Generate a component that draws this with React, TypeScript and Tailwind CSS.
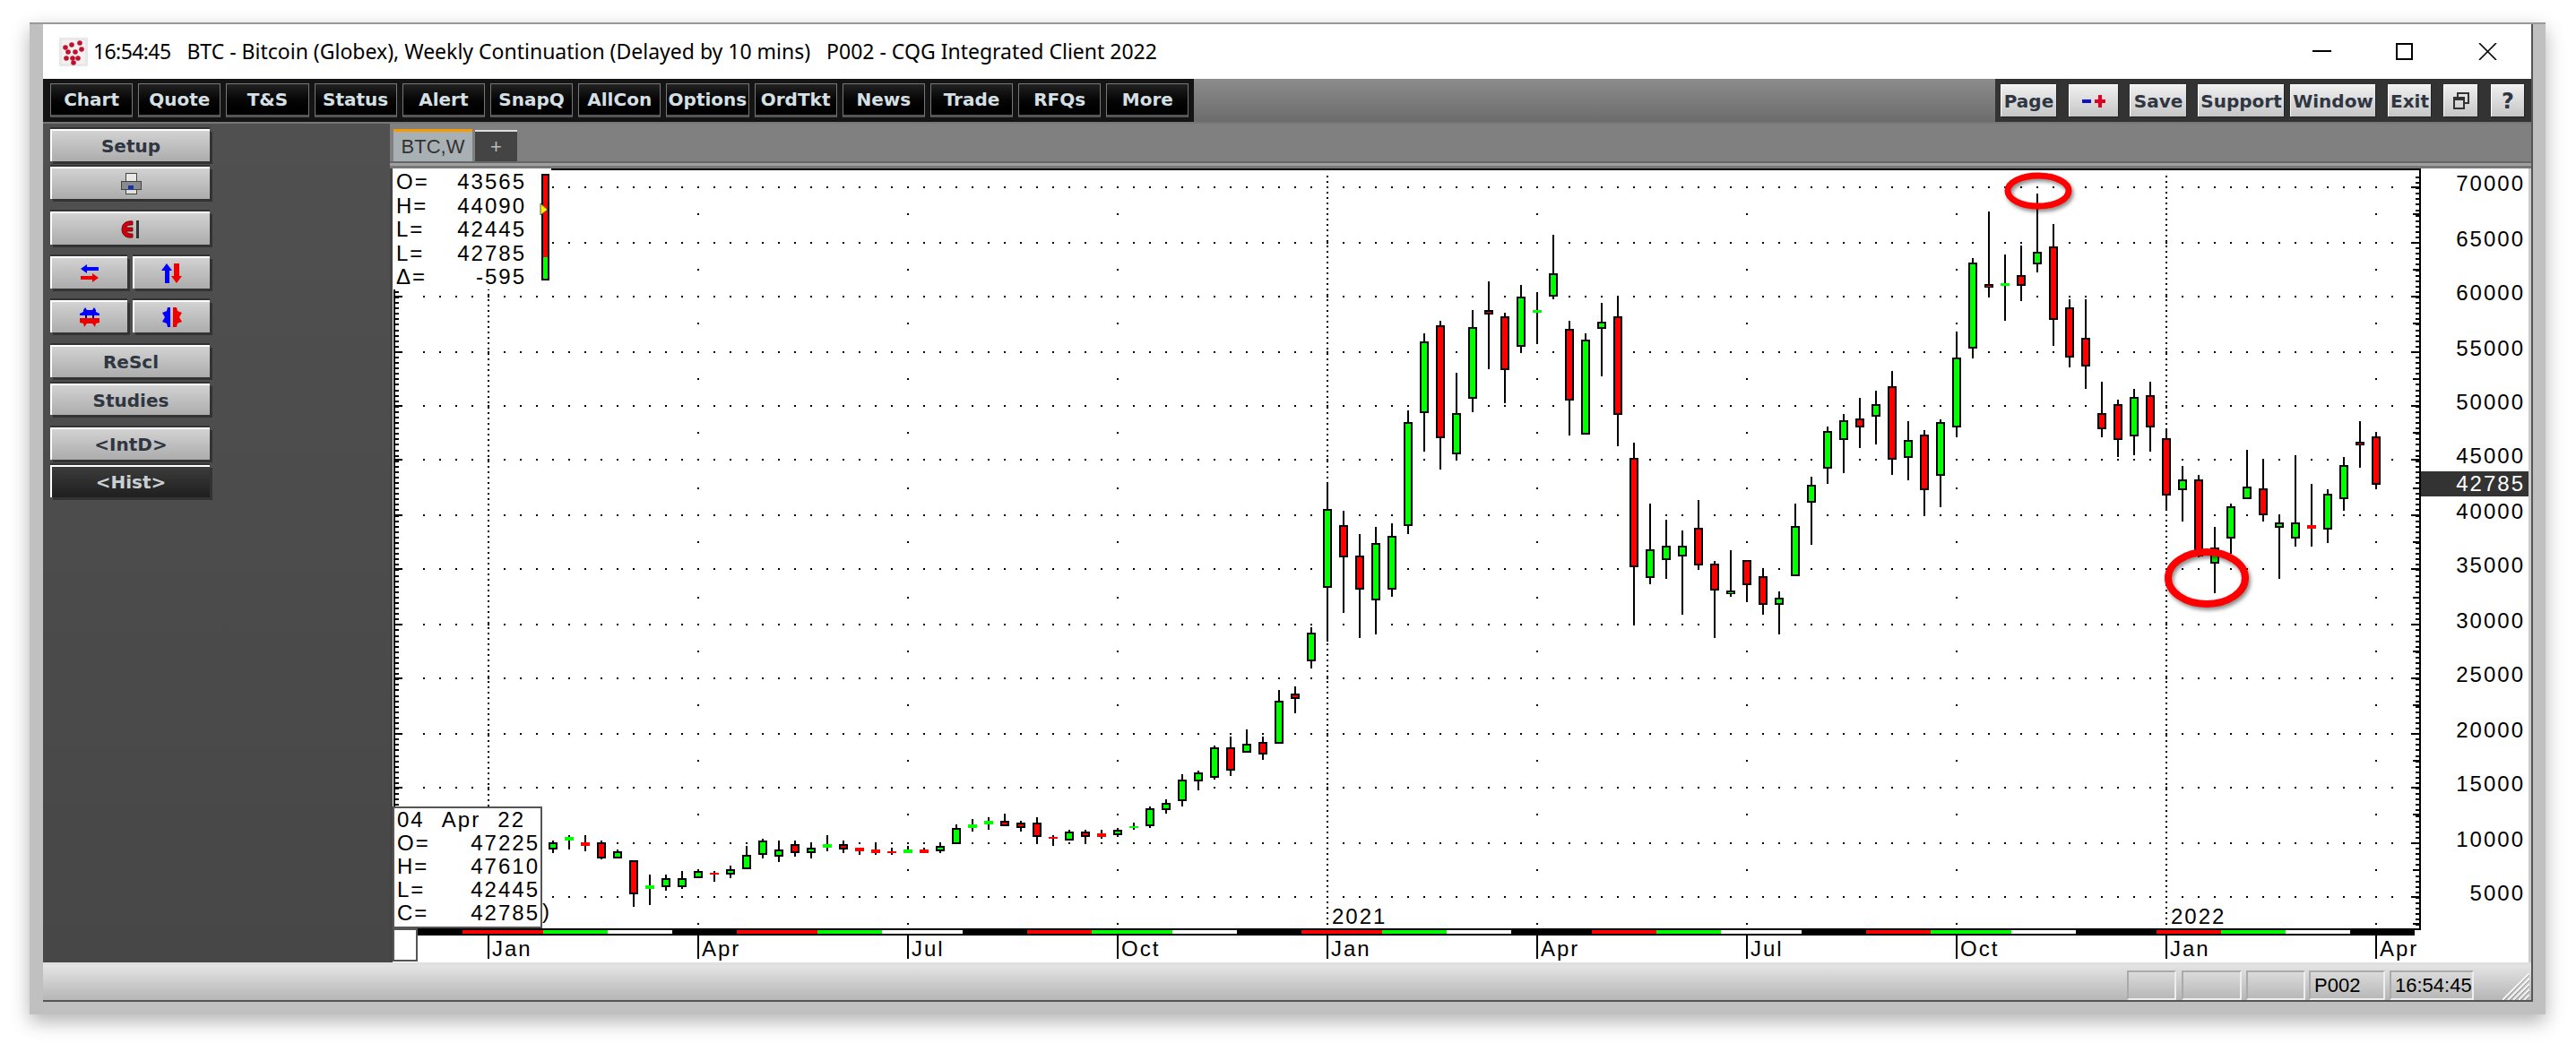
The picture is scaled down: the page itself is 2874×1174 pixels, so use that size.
import React from 'react';

// y pixels of each weekly bar: [high, body top, body bottom, low, kind]
// g/r = outlined body, G/R = flat dash without outline. First bar is i=4.
type Bar = [number, number, number, number, 'g' | 'r' | 'G' | 'R'];
const BARS: Bar[] = [
    [938, 940, 948, 952, 'g'], [932, 934, 938, 948, 'G'], [932, 940, 944, 950, 'R'], [938, 940, 958, 959, 'r'],
    [948, 950, 958, 958, 'g'], [960, 960, 998, 1012, 'r'], [976, 988, 992, 1010, 'G'], [976, 980, 990, 994, 'g'],
    [972, 980, 990, 992, 'g'], [970, 972, 980, 980, 'g'], [972, 974, 976, 984, 'R'], [966, 970, 976, 980, 'g'],
    [944, 954, 970, 970, 'g'], [936, 938, 954, 958, 'g'], [938, 948, 956, 962, 'g'], [938, 942, 952, 956, 'r'],
    [941, 946, 952, 958, 'g'], [932, 942, 946, 950, 'G'], [938, 942, 948, 952, 'r'], [946, 946, 950, 954, 'R'],
    [940, 948, 952, 954, 'R'], [946, 950, 952, 954, 'R'], [944, 948, 952, 952, 'G'], [946, 948, 952, 952, 'R'],
    [940, 944, 950, 952, 'g'], [920, 924, 942, 942, 'g'], [914, 920, 924, 928, 'G'], [912, 916, 920, 926, 'G'],
    [908, 916, 922, 922, 'r'], [916, 918, 924, 928, 'r'], [912, 918, 934, 942, 'r'], [932, 934, 936, 944, 'R'],
    [926, 928, 938, 938, 'g'], [926, 928, 934, 942, 'r'], [926, 930, 934, 936, 'R'], [924, 926, 932, 934, 'g'],
    [918, 922, 924, 926, 'G'], [900, 902, 922, 924, 'g'], [892, 896, 904, 908, 'g'], [864, 870, 894, 900, 'g'],
    [860, 862, 872, 882, 'g'], [832, 834, 868, 870, 'g'], [822, 834, 860, 866, 'r'], [814, 830, 840, 840, 'g'],
    [822, 828, 842, 848, 'r'], [770, 782, 830, 830, 'g'], [766, 774, 780, 796, 'r'], [700, 706, 738, 746, 'g'],
    [538, 568, 656, 716, 'g'], [570, 586, 622, 684, 'r'], [596, 620, 658, 712, 'r'], [588, 606, 670, 708, 'g'],
    [584, 598, 658, 666, 'g'], [458, 471, 587, 596, 'g'], [372, 381, 461, 504, 'g'], [358, 363, 489, 524, 'r'],
    [416, 461, 507, 514, 'g'], [346, 365, 445, 460, 'g'], [314, 346, 351, 412, 'r'], [349, 353, 413, 450, 'r'],
    [318, 331, 387, 394, 'g'], [326, 346, 349, 384, 'G'], [262, 305, 331, 334, 'g'], [358, 367, 447, 486, 'r'],
    [372, 379, 485, 485, 'g'], [338, 359, 367, 420, 'g'], [330, 353, 463, 498, 'r'], [494, 511, 633, 697, 'r'],
    [562, 613, 645, 652, 'g'], [580, 609, 625, 646, 'g'], [592, 609, 621, 686, 'g'], [558, 589, 631, 636, 'r'],
    [626, 629, 659, 712, 'r'], [614, 659, 663, 666, 'g'], [625, 625, 653, 672, 'r'], [634, 643, 675, 686, 'r'],
    [660, 667, 675, 708, 'g'], [562, 587, 643, 643, 'g'], [532, 541, 561, 608, 'g'], [476, 481, 523, 540, 'g'],
    [462, 469, 491, 528, 'g'], [444, 467, 477, 500, 'r'], [436, 451, 465, 496, 'g'], [414, 431, 513, 530, 'r'],
    [470, 491, 511, 536, 'g'], [480, 485, 547, 576, 'r'], [468, 471, 531, 566, 'g'], [370, 399, 477, 488, 'g'],
    [288, 293, 389, 400, 'g'], [236, 317, 321, 332, 'r'], [284, 316, 319, 358, 'G'], [274, 307, 319, 336, 'r'],
    [216, 281, 295, 304, 'g'], [250, 275, 357, 386, 'r'], [334, 343, 399, 410, 'r'], [334, 377, 409, 434, 'r'],
    [426, 461, 479, 488, 'r'], [446, 451, 491, 510, 'r'], [434, 443, 487, 508, 'g'], [426, 441, 477, 504, 'r'],
    [480, 489, 553, 570, 'r'], [520, 535, 547, 582, 'g'], [530, 535, 621, 622, 'r'], [588, 611, 629, 662, 'g'],
    [562, 565, 601, 618, 'g'], [502, 543, 557, 557, 'g'], [512, 545, 575, 582, 'r'], [574, 583, 589, 646, 'g'],
    [508, 583, 601, 610, 'g'], [540, 586, 590, 610, 'R'], [546, 551, 591, 606, 'g'], [510, 519, 557, 570, 'g'],
    [470, 493, 497, 522, 'r'], [482, 487, 541, 546, 'r'],
];

const ROWS = [209, 271, 331, 393, 453, 513, 575, 635, 697, 757, 819, 879, 941, 1001];
const HALF_ROWS = [239, 301, 361, 423, 483, 545, 605, 667, 727, 787, 849, 909, 971, 1031];
const PRICES = ['70000', '65000', '60000', '55000', '50000', '45000', '40000', '35000', '30000', '25000', '20000', '15000', '10000', '5000'];
const TICKS: [number, string][] = [
    [545, 'Jan'], [779, 'Apr'], [1013, 'Jul'], [1247, 'Oct'], [1481, 'Jan'], [1715, 'Apr'],
    [1949, 'Jul'], [2183, 'Oct'], [2417, 'Jan'], [2651, 'Apr'],
];
const BANDS: [number, number, string][] = [
    [516, 606, '#ff0000'], [606, 678, '#00ff00'], [678, 750, '#ffffff'],
    [822, 912, '#ff0000'], [912, 984, '#00ff00'], [984, 1074, '#ffffff'],
    [1146, 1218, '#ff0000'], [1218, 1308, '#00ff00'], [1308, 1380, '#ffffff'],
    [1452, 1542, '#ff0000'], [1542, 1614, '#00ff00'], [1614, 1686, '#ffffff'],
    [1776, 1848, '#ff0000'], [1848, 1920, '#00ff00'], [1920, 2010, '#ffffff'],
    [2082, 2154, '#ff0000'], [2154, 2244, '#00ff00'], [2244, 2316, '#ffffff'],
    [2406, 2478, '#ff0000'], [2478, 2550, '#00ff00'], [2550, 2622, '#ffffff'],
];

const TOP_BUTTONS = ['Chart', 'Quote', 'T&S', 'Status', 'Alert', 'SnapQ', 'AllCon', 'Options', 'OrdTkt', 'News', 'Trade', 'RFQs', 'More'];

const range = (from: number, to: number, step: number) => {
    const out: number[] = [];
    for (let v = from; v <= to; v += step) out.push(v);
    return out;
};

const Chart: React.FC = () => {
    const minor = range(0, 137, 1).map(k => Math.round(197 + k * 6.09));
    return (
        <svg className="absolute left-0 top-0" width={2383} height={886} viewBox="438 188 2383 886" shapeRendering="crispEdges">
            {/* grid dots */}
            {ROWS.map(y => range(473, 2669, 18).map(x => <rect key={`${x}-${y}`} x={x - 1} y={y - 1} width={2} height={2} fill="#000" />))}
            {HALF_ROWS.map(y => TICKS.filter(t => t[1] !== 'Jan').map(t => <rect key={`${t[0]}-${y}`} x={t[0] - 1} y={y - 1} width={2} height={2} fill="#000" />))}
            {[545, 1481, 2417].map(x => range(196, 1032, 6).map(y => <rect key={`${x}:${y}`} x={x - 1} y={y} width={2} height={2} fill="#000" />))}

            {/* bars */}
            {BARS.map((b, n) => {
                const x = 545 + (n + 4) * 18;
                const [hi, top, bot, lo, kind] = b;
                const flat = kind === 'G' || kind === 'R';
                const color = kind === 'g' || kind === 'G' ? '#00ff00' : '#ff0000';
                return (
                    <g key={n}>
                        <rect x={x - 1} y={hi} width={2} height={lo - hi} fill="#000" />
                        {flat ? (
                            <rect x={x - 5} y={top} width={10} height={bot - top} fill={color} />
                        ) : (
                            <>
                                <rect x={x - 5} y={top} width={10} height={bot - top} fill="#000" />
                                <rect x={x - 3} y={top + 2} width={6} height={Math.max(bot - top - 4, 1)} fill={color} />
                            </>
                        )}
                    </g>
                );
            })}

            {/* axes */}
            <rect x={438} y={188} width={2263} height={2} fill="#000" />
            <rect x={2699} y={188} width={2} height={850} fill="#000" />
            <rect x={439} y={188} width={2} height={850} fill="#000" />
            {minor.map(y => <rect key={y} x={2695} y={y} width={4} height={2} fill="#000" />)}
            {minor.map(y => <rect key={y} x={441} y={y} width={4} height={2} fill="#000" />)}
            {HALF_ROWS.map(y => <rect key={y} x={2692} y={y - 1} width={7} height={2} fill="#000" />)}
            {ROWS.map(y => <rect key={y} x={2690} y={y - 1} width={9} height={2} fill="#000" />)}
            {ROWS.map(y => <rect key={y} x={441} y={y - 1} width={8} height={2} fill="#000" />)}

            {/* month strip under the plot */}
            <rect x={438} y={1036} width={2263} height={2} fill="#000" />
            <rect x={466} y={1036} width={2228} height={8} fill="#000" />
            {BANDS.map(b => <rect key={b[0]} x={b[0]} y={1038} width={b[1] - b[0]} height={4} fill={b[2]} />)}
            {TICKS.map(t => <rect key={t[0]} x={t[0] - 1} y={1044} width={2} height={26} fill="#000" />)}

            {/* hand drawn marks */}
            <g shapeRendering="auto" className="drop-shadow-[2px_3px_2px_rgba(0,0,0,0.45)]" fill="none" stroke="#ff0000">
                <ellipse cx={2274} cy={213} rx={34} ry={17} strokeWidth={7} />
                <ellipse cx={2462} cy={645} rx={43} ry={29} strokeWidth={8} />
            </g>

            <g shapeRendering="auto" fontFamily="'Liberation Sans', sans-serif" fontSize={24} letterSpacing={2} fill="#000">
                {PRICES.map((p, n) => <text key={p} x={2817} y={ROWS[n] + 4} textAnchor="end">{p}</text>)}
                {TICKS.map(t => <text key={t[0]} x={t[0] + 4} y={1067}>{t[1]}</text>)}
                <text x={1486} y={1031}>2021</text>
                <text x={2422} y={1031}>2022</text>
            </g>
        </svg>
    );
};

const Legend: React.FC = () => (
    <div className="absolute left-0 top-0 w-[177px] h-[135px] bg-white pl-[4px] pt-[2px] text-[24px] leading-[26px] tracking-[2px] text-black">
        {[['O=', '43565'], ['H=', '44090'], ['L=', '42445'], ['L=', '42785'], ['Δ=', '-595']].map((r, n) => (
            <div key={n} className="flex justify-between w-[145px] h-[26.5px]">
                <span>{r[0]}</span>
                <span>{r[1]}</span>
            </div>
        ))}
        <svg className="absolute left-[164px] top-[6px]" width={14} height={120} shapeRendering="crispEdges">
            <rect x={2} y={0} width={9} height={119} fill="#000" />
            <rect x={4} y={2} width={5} height={91} fill="#ff0000" />
            <rect x={4} y={93} width={5} height={24} fill="#00ff00" />
            <path d="M1 33 L9 40 L1 46 Z" fill="#ffee00" stroke="#555" shapeRendering="auto" />
        </svg>
    </div>
);

const DataBox: React.FC = () => (
    <>
        <div className="absolute left-0 top-[712px] w-[167px] h-[136px] border-2 border-[#555] bg-white pl-[3px] pr-[1px] text-[24px] leading-[26px] tracking-[2px] text-black">
            <div className="flex justify-between pr-[16px] h-[26px]">
                <span>04</span>
                <span>Apr</span>
                <span>22</span>
            </div>
            {[['O=', '47225'], ['H=', '47610'], ['L=', '42445'], ['C=', '42785']].map((r, n) => (
                <div key={n} className="flex justify-between h-[26px]">
                    <span>{r[0]}</span>
                    <span>{r[1]}</span>
                </div>
            ))}
        </div>
        <span className="absolute left-[167px] top-[816px] text-[24px] leading-[26px] text-black">)</span>
        <div className="absolute left-0 top-[848px] w-[28px] h-[37px] border-2 border-[#555] bg-white" />
    </>
);

const SideButton: React.FC<{ mt?: string; w?: string; dark?: boolean; h?: string; children: React.ReactNode }> = ({ mt = '', w = 'w-[178px]', dark, h = 'h-[36px]', children }) => (
    <div
        className={`${mt} ${w} ${h} flex items-center justify-center border-t-2 border-l-2 border-white shadow-[3px_3px_0_#333,0_-2px_0_#333] text-[20px] font-bold ${
            dark ? 'bg-gradient-to-b from-[#3c3c3c] to-[#1f1f1f] text-[#c8d0d4]' : 'bg-gradient-to-b from-[#d2d2d2] to-[#acacac] text-[#2f3642]'
        }`}
    >
        {children}
    </div>
);

const Pair: React.FC<{ mt: string; left: React.ReactNode; right: React.ReactNode }> = ({ mt, left, right }) => (
    <div className={`${mt} flex gap-[6px] w-[178px]`}>
        <SideButton w="w-[86px]">{left}</SideButton>
        <SideButton w="w-[86px]">{right}</SideButton>
    </div>
);

const B = '#0000ff';
const R = '#ee0000';

const SwapH = () => (
    <svg width={22} height={22} viewBox="0 0 22 22">
        <path d="M8 1 L1 6 L8 11 L8 8 L21 8 L21 4 L8 4 Z" fill={B} />
        <path d="M14 11 L21 16 L14 21 L14 18 L1 18 L1 14 L14 14 Z" fill={R} />
    </svg>
);
const SwapV = () => (
    <svg width={24} height={24} viewBox="0 0 24 24">
        <path d="M6 1 L0 9 L4 9 L4 23 L9 23 L9 9 L12 9 Z" fill={B} />
        <path d="M17 23 L23 15 L20 15 L20 1 L14 1 L14 15 L11 15 Z" fill={R} />
    </svg>
);
const MergeH = () => (
    <svg width={22} height={22} viewBox="0 0 22 22">
        <path d="M6 0 L8 3 L14 3 L16 0 L18 3 L18 5 L22 7 L22 9 L0 9 L0 7 L4 5 L4 3 Z" fill={B} />
        <path d="M0 12 L22 12 L22 17 L18 18 L17 22 L14 18 L8 18 L5 22 L4 18 L0 17 Z" fill={R} />
        <rect x="6" y="9" width="2" height="3" fill="#000080" />
        <rect x="14" y="9" width="2" height="3" fill="#000080" />
    </svg>
);
const MergeV = () => (
    <svg width={22} height={22} viewBox="0 0 22 22">
        <path d="M9 0 L9 22 L6 22 L5 18 L0 16 L3 11 L0 6 L5 4 L6 0 Z" fill={B} />
        <path d="M12 0 L16 0 L17 4 L22 6 L19 11 L22 16 L17 18 L16 22 L12 22 Z" fill={R} />
    </svg>
);

const Sidebar: React.FC = () => (
    <div className="w-[387px] bg-gradient-to-b from-[#505050] to-[#474747] pt-[6px] pl-[8px]">
        <SideButton>Setup</SideButton>
        <SideButton mt="mt-[6px]">
            <svg width={24} height={24} viewBox="0 0 24 24" shapeRendering="crispEdges">
                <rect x="6" y="0" width="12" height="9" fill="#e8e8e8" stroke="#444" />
                <rect x="1" y="9" width="22" height="9" fill="#8a8a8a" stroke="#444" />
                <rect x="9" y="14" width="6" height="4" fill="#1030c0" />
                <rect x="6" y="18" width="12" height="5" fill="#e0e0e0" stroke="#444" />
            </svg>
        </SideButton>
        <SideButton mt="mt-[14px]" h="h-[37px]">
            <svg width={26} height={22} viewBox="0 0 26 22">
                <path d="M15 2 C7 1 3 5 3 11 C3 17 7 21 15 20 L15 16 C10 16 8 14 8 13 L15 13 L15 9 L8 9 C8 7 10 6 15 6 Z" fill="#cc0010" stroke="#600" strokeWidth="0.8" />
                <rect x="19" y="1" width="3" height="20" fill="#333" />
            </svg>
        </SideButton>
        <Pair mt="mt-[13px]" left={<SwapH />} right={<SwapV />} />
        <Pair mt="mt-[13px]" left={<MergeH />} right={<MergeV />} />
        <SideButton mt="mt-[14px]">ReScl</SideButton>
        <SideButton mt="mt-[7px]" h="h-[35px]">Studies</SideButton>
        <SideButton mt="mt-[14px]">&lt;IntD&gt;</SideButton>
        <SideButton mt="mt-[6px]" dark>&lt;Hist&gt;</SideButton>
    </div>
);

const RightButton: React.FC<{ w: string; ml: string; children: React.ReactNode }> = ({ w, ml, children }) => (
    <div className={`${w} ${ml} h-[36px] flex items-center justify-center border-t border-l border-white bg-gradient-to-b from-[#f0f0f0] to-[#c6c6c6] text-[20px] font-bold text-[#2f3642] shadow-[1px_1px_0_#222]`}>
        {children}
    </div>
);

const Toolbar: React.FC = () => (
    <div className="h-[50px] flex bg-gradient-to-b from-[#8c8c8c] to-[#6c6c6c] border-b-2 border-[#777] font-['DejaVu_Sans',sans-serif]">
        <div className="w-[1284px] bg-[#141414] flex items-center gap-[6px] pl-[8px]">
            {TOP_BUTTONS.map(label => (
                <div
                    key={label}
                    className="w-[92.2px] h-[38px] flex items-center justify-center border-l border-t border-r border-[#777] border-b-[3px] border-b-[#555] bg-gradient-to-b from-[#222] to-[#000] text-[20px] font-bold text-[#d6e0e4]"
                >
                    {label}
                </div>
            ))}
        </div>
        <div className="ml-auto w-[598px] bg-[#333] flex items-center pl-[6px]">
            <RightButton w="w-[62px]" ml="">Page</RightButton>
            <RightButton w="w-[55px]" ml="ml-[14px]">
                <svg width={28} height={18} viewBox="0 0 28 18" shapeRendering="crispEdges">
                    <rect x="1" y="7" width="10" height="4" fill="#1010c8" />
                    <rect x="15" y="7" width="12" height="4" fill="#e00020" />
                    <rect x="19" y="2" width="4" height="14" fill="#e00020" />
                </svg>
            </RightButton>
            <RightButton w="w-[63px]" ml="ml-[13px]">Save</RightButton>
            <RightButton w="w-[96px]" ml="ml-[13px]">Support</RightButton>
            <RightButton w="w-[95px]" ml="ml-[7px]">Window</RightButton>
            <RightButton w="w-[48px]" ml="ml-[14px]">Exit</RightButton>
            <RightButton w="w-[38px]" ml="ml-[14px]">
                <svg width={20} height={20} viewBox="0 0 20 20" fill="none" stroke="#333" strokeWidth="2" shapeRendering="crispEdges">
                    <path d="M6 5 L6 1 L18 1 L18 12 L13 12" />
                    <rect x="2" y="6" width="11" height="12" />
                    <path d="M2 8 L13 8" />
                </svg>
            </RightButton>
            <RightButton w="w-[37px]" ml="ml-[15px]"><span className="text-[24px]">?</span></RightButton>
        </div>
    </div>
);

const TitleBar: React.FC = () => (
    <div className="h-[61px] bg-white flex items-center pl-[18px] font-['Noto_Sans',sans-serif] text-[23px] text-black">
        <svg width={32} height={32} viewBox="0 0 32 32" className="mr-[6px]">
            <rect width={32} height={32} fill="#e8e8e8" />
            <rect x={3} y={3} width={26} height={26} fill="#f4f0f0" />
            {[[7, 11], [14, 8], [23, 6], [10, 16], [18, 16], [25, 13], [8, 23], [15, 23], [21, 23], [16, 28]].map((p, n) => (
                <circle key={n} cx={p[0]} cy={p[1]} r={2.8} fill="#c01030" />
            ))}
        </svg>
        <span className="tracking-[-0.6px]">16:54:45</span>
        <span className="whitespace-pre">{'   BTC - Bitcoin (Globex), Weekly Continuation (Delayed by 10 mins)   P002 - CQG Integrated Client 2022'}</span>
        <div className="ml-auto flex items-center pr-[38px]">
            <svg width={21} height={3} className="mr-[72px]"><rect width={21} height={2} fill="#000" /></svg>
            <svg width={19} height={19} className="mr-[73px]" shapeRendering="crispEdges"><rect x={1} y={1} width={17} height={17} fill="none" stroke="#000" strokeWidth={2} /></svg>
            <svg width={21} height={19}><path d="M1 0 L20 19 M20 0 L1 19" stroke="#000" strokeWidth={1.6} /></svg>
        </div>
    </div>
);

const Tabs: React.FC = () => (
    <>
        <div className="h-[42px] bg-[#808080] flex items-end pl-[4px] gap-[3px] font-['Liberation_Sans',sans-serif] text-[22px]">
            <div className="w-[88px] h-[36px] flex items-center justify-center border-t-[3px] border-[#f59a00] bg-[#a8b0b3] text-[#333]">BTC,W</div>
            <div className="w-[47px] h-[35px] flex items-center justify-center border-t-2 border-[#ddd] bg-[#444] text-[#bbb]">+</div>
        </div>
        <div className="h-[8px] bg-[#777] border-t-2 border-[#666]">
            <div className="h-[3px] bg-[#a0a0a0]" />
        </div>
    </>
);

const StatusBar: React.FC = () => {
    const cell = 'h-[33px] flex items-center pl-[4px] border-t-2 border-l-2 border-[#aaa] border-b-2 border-r-2 border-b-[#eee] border-r-[#eee]';
    return (
        <div className="h-[39px] bg-gradient-to-b from-[#e4e4e4] to-[#b6b6b6] flex items-end justify-end font-['Liberation_Sans',sans-serif] text-[22px] text-black">
            <div className={`${cell} w-[55px]`} />
            <div className={`${cell} w-[67px] ml-[6px]`} />
            <div className={`${cell} w-[66px] ml-[5px]`} />
            <div className={`${cell} w-[85px] ml-[4px]`}>P002</div>
            <div className={`${cell} w-[94px] ml-[5px]`}>16:54:45</div>
            <svg width={30} height={30} className="ml-[32px] mr-[2px]">
                {[6, 12, 18, 24, 30].map(v => (
                    <g key={v}>
                        <path d={`M${30 - v} 30 L30 ${30 - v}`} stroke="#f4f4f4" strokeWidth={2} />
                        <path d={`M${32 - v} 30 L30 ${32 - v}`} stroke="#999" strokeWidth={1} />
                    </g>
                ))}
            </svg>
        </div>
    );
};

export default function App() {
    return (
        <div className="w-[2874px] h-[1174px] bg-white overflow-hidden pt-[25px] pl-[33px]">
            <div className="w-[2807px] h-[1107px] bg-[#c0c0c0] border-t-2 border-[#999] pl-[15px] pr-[14px] pb-[14px] shadow-[0_8px_20px_rgba(0,0,0,0.3)]">
                <div className="h-full flex flex-col border-r-2 border-[#555]">
                    <TitleBar />
                    <Toolbar />
                    <div className="h-[936px] flex font-['DejaVu_Sans',sans-serif]">
                        <Sidebar />
                        <div className="flex-1 flex flex-col">
                            <Tabs />
                            <div className="h-[886px] flex bg-[#444] pl-[3px] border-r-[3px] border-[#ccc] font-['Liberation_Sans',sans-serif]">
                                <div className="relative w-[2383px] h-[886px] bg-white overflow-hidden">
                                    <Chart />
                                    <Legend />
                                    <DataBox />
                                    <div className="absolute left-[2263px] top-[338px] w-[120px] h-[28px] bg-[#333] flex items-center justify-end pr-[4px] text-[24px] tracking-[2px] text-white">42785</div>
                                </div>
                            </div>
                        </div>
                    </div>
                    <div className="h-[3px] bg-[#e0e0e0]" />
                    <StatusBar />
                    <div className="h-[2px] bg-[#555]" />
                </div>
            </div>
        </div>
    );
}
